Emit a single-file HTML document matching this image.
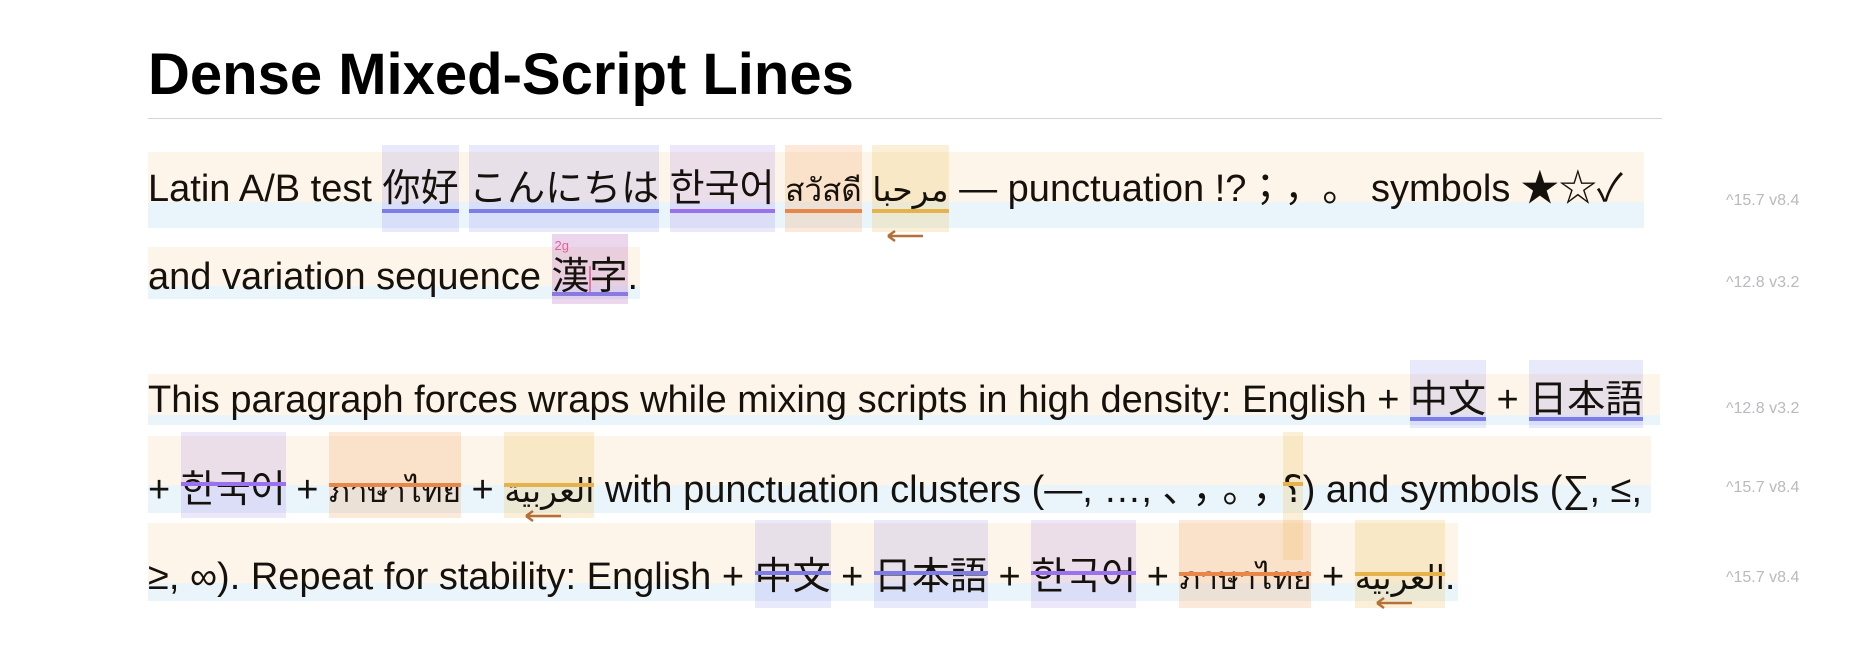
<!DOCTYPE html>
<html><head><meta charset="utf-8">
<style>
html{margin:0;padding:0;background:#fff}
body{margin:0;padding:0;width:1870px;height:657px;overflow:hidden;position:relative;font-family:"Liberation Sans","Noto Sans CJK JP","DejaVu Sans",sans-serif;color:#15110c;text-spacing-trim:space-all}
h1{position:absolute;left:148px;top:40px;margin:0;font-size:58px;font-weight:bold;line-height:70px;color:#000}
.rule{position:absolute;left:148px;top:118px;width:1514px;height:1px;background:#d4d4d4}
.bg{position:absolute;left:148px;z-index:-2}
.ln{position:absolute;left:148px;font-size:38px;line-height:40px;white-space:nowrap;text-spacing-trim:space-all}
.tk{position:relative}
.tk::before{content:"";position:absolute;left:0;right:0;z-index:-1}
.bar{position:absolute;left:0;right:0;height:4px}
.arr{position:absolute;width:38px;height:12px}
.st{font-size:31.5px}
.sa{font-size:33px}
.cjk::before{background:rgba(125,125,235,.17)}
.ko::before{background:rgba(155,120,225,.18)}
.th::before{background:rgba(240,155,85,.22)}
.ar::before{background:rgba(240,195,95,.25)}
.kj::before{background:rgba(190,120,200,.30)}
.bc{background:#7d7de8}.bk{background:#9a72ee}.bt{background:#e8874a}.ba{background:#e6b24e}
.l1 .tk::before{top:-23px;bottom:-22px}
.l2 .tk::before{top:-22px;bottom:-6px}
.p1 .tk::before{top:-19px;bottom:-7px}
.pb .tk::before{top:-37px;bottom:-7px}
.pc .tk::before{top:-36px;bottom:-10px}
.pb .q::before{top:-37px;bottom:-49px}
.ann{position:absolute;left:1726px;font-size:16px;color:#b9b9c2;line-height:18px}
bdi{unicode-bidi:isolate}
</style></head><body>
<h1>Dense Mixed-Script Lines</h1>
<div class="rule"></div>

<div class="bg" style="top:152px;height:76px;width:1496px;background:linear-gradient(#fdf5e9 0 50px,#eaf5fb 50px)"></div>
<div class="bg" style="top:247px;height:52px;width:492px;background:linear-gradient(#fdf5e9 0 39px,#eaf5fb 39px)"></div>
<div class="bg" style="top:374px;height:51px;width:1512px;background:linear-gradient(#fdf5e9 0 41px,#eaf5fb 41px)"></div>
<div class="bg" style="top:436px;height:77px;width:1503px;background:linear-gradient(#fdf5e9 0 49px,#eaf5fb 49px)"></div>
<div class="bg" style="top:523px;height:78px;width:1310px;background:linear-gradient(#fdf5e9 0 60px,#eaf5fb 60px)"></div>

<div class="ln l1" style="top:169px">Latin A/B test <span class="tk cjk">你好<span class="bar bc" style="bottom:-3px"></span></span> <span class="tk cjk">こんにちは<span class="bar bc" style="bottom:-3px"></span></span> <span class="tk ko">한국어<span class="bar bk" style="bottom:-3px"></span></span> <span class="tk th"><span class="st">สวัสดี</span><span class="bar bt" style="bottom:-3px"></span></span> <span class="tk ar"><bdi class="sa">مرحبا</bdi><span class="bar ba" style="bottom:-3px"></span><svg class="arr" style="left:14px;bottom:-32px" viewBox="0 0 38 12"><path d="M2 6H37M2 6L9 1M2 6L9 11" stroke="#b5703a" stroke-width="2.5" fill="none"/></svg></span> — punctuation !?；，。 symbols ★☆✓</div>

<div class="ln l2" style="top:257px">and variation sequence <span class="tk kj"><span style="position:absolute;left:3px;top:-17px;font-size:13px;line-height:13px;color:#e0609a">2g</span>漢<span style="position:absolute;left:37px;top:10px;width:2px;height:26px;background:#e07aa8"></span>字<span class="bar bc" style="bottom:2px;background:#8a7ae0"></span></span>.</div>

<div class="ln p1" style="top:380px">This paragraph forces wraps while mixing scripts in high density: English + <span class="tk cjk">中文<span class="bar bc" style="bottom:0px"></span></span> + <span class="tk cjk">日本語<span class="bar bc" style="bottom:0px"></span></span></div>

<div class="ln pb" style="top:470px">+ <span class="tk ko">한국어<span class="bar bk" style="top:13px"></span></span> + <span class="tk th"><span class="st">ภาษาไทย</span><span class="bar bt" style="top:14px"></span></span> + <span class="tk ar"><bdi class="sa">العربية</bdi><span class="bar ba" style="top:14px"></span><svg class="arr" style="left:20px;bottom:-11px" viewBox="0 0 38 12"><path d="M2 6H37M2 6L9 1M2 6L9 11" stroke="#b5703a" stroke-width="2.5" fill="none"/></svg></span> with punctuation clusters (—, …, <span style="letter-spacing:-8px">、，。，</span><span class="tk ar q">؟<span class="bar ba" style="top:13px"></span></span>) and symbols (∑, ≤,</div>

<div class="ln pc" style="top:557px">≥, ∞). Repeat for stability: English + <span class="tk cjk">中文<span class="bar bc" style="top:15px"></span></span> + <span class="tk cjk">日本語<span class="bar bc" style="top:15px"></span></span> + <span class="tk ko">한국어<span class="bar bk" style="top:15px"></span></span> + <span class="tk th"><span class="st">ภาษาไทย</span><span class="bar bt" style="top:16px"></span></span> + <span class="tk ar"><bdi class="sa">العربية</bdi><span class="bar ba" style="top:16px"></span><svg class="arr" style="left:20px;bottom:-11px" viewBox="0 0 38 12"><path d="M2 6H37M2 6L9 1M2 6L9 11" stroke="#b5703a" stroke-width="2.5" fill="none"/></svg></span>.</div>

<div class="ann" style="top:192px">^15.7 v8.4</div>
<div class="ann" style="top:274px">^12.8 v3.2</div>
<div class="ann" style="top:400px">^12.8 v3.2</div>
<div class="ann" style="top:479px">^15.7 v8.4</div>
<div class="ann" style="top:569px">^15.7 v8.4</div>
</body></html>
